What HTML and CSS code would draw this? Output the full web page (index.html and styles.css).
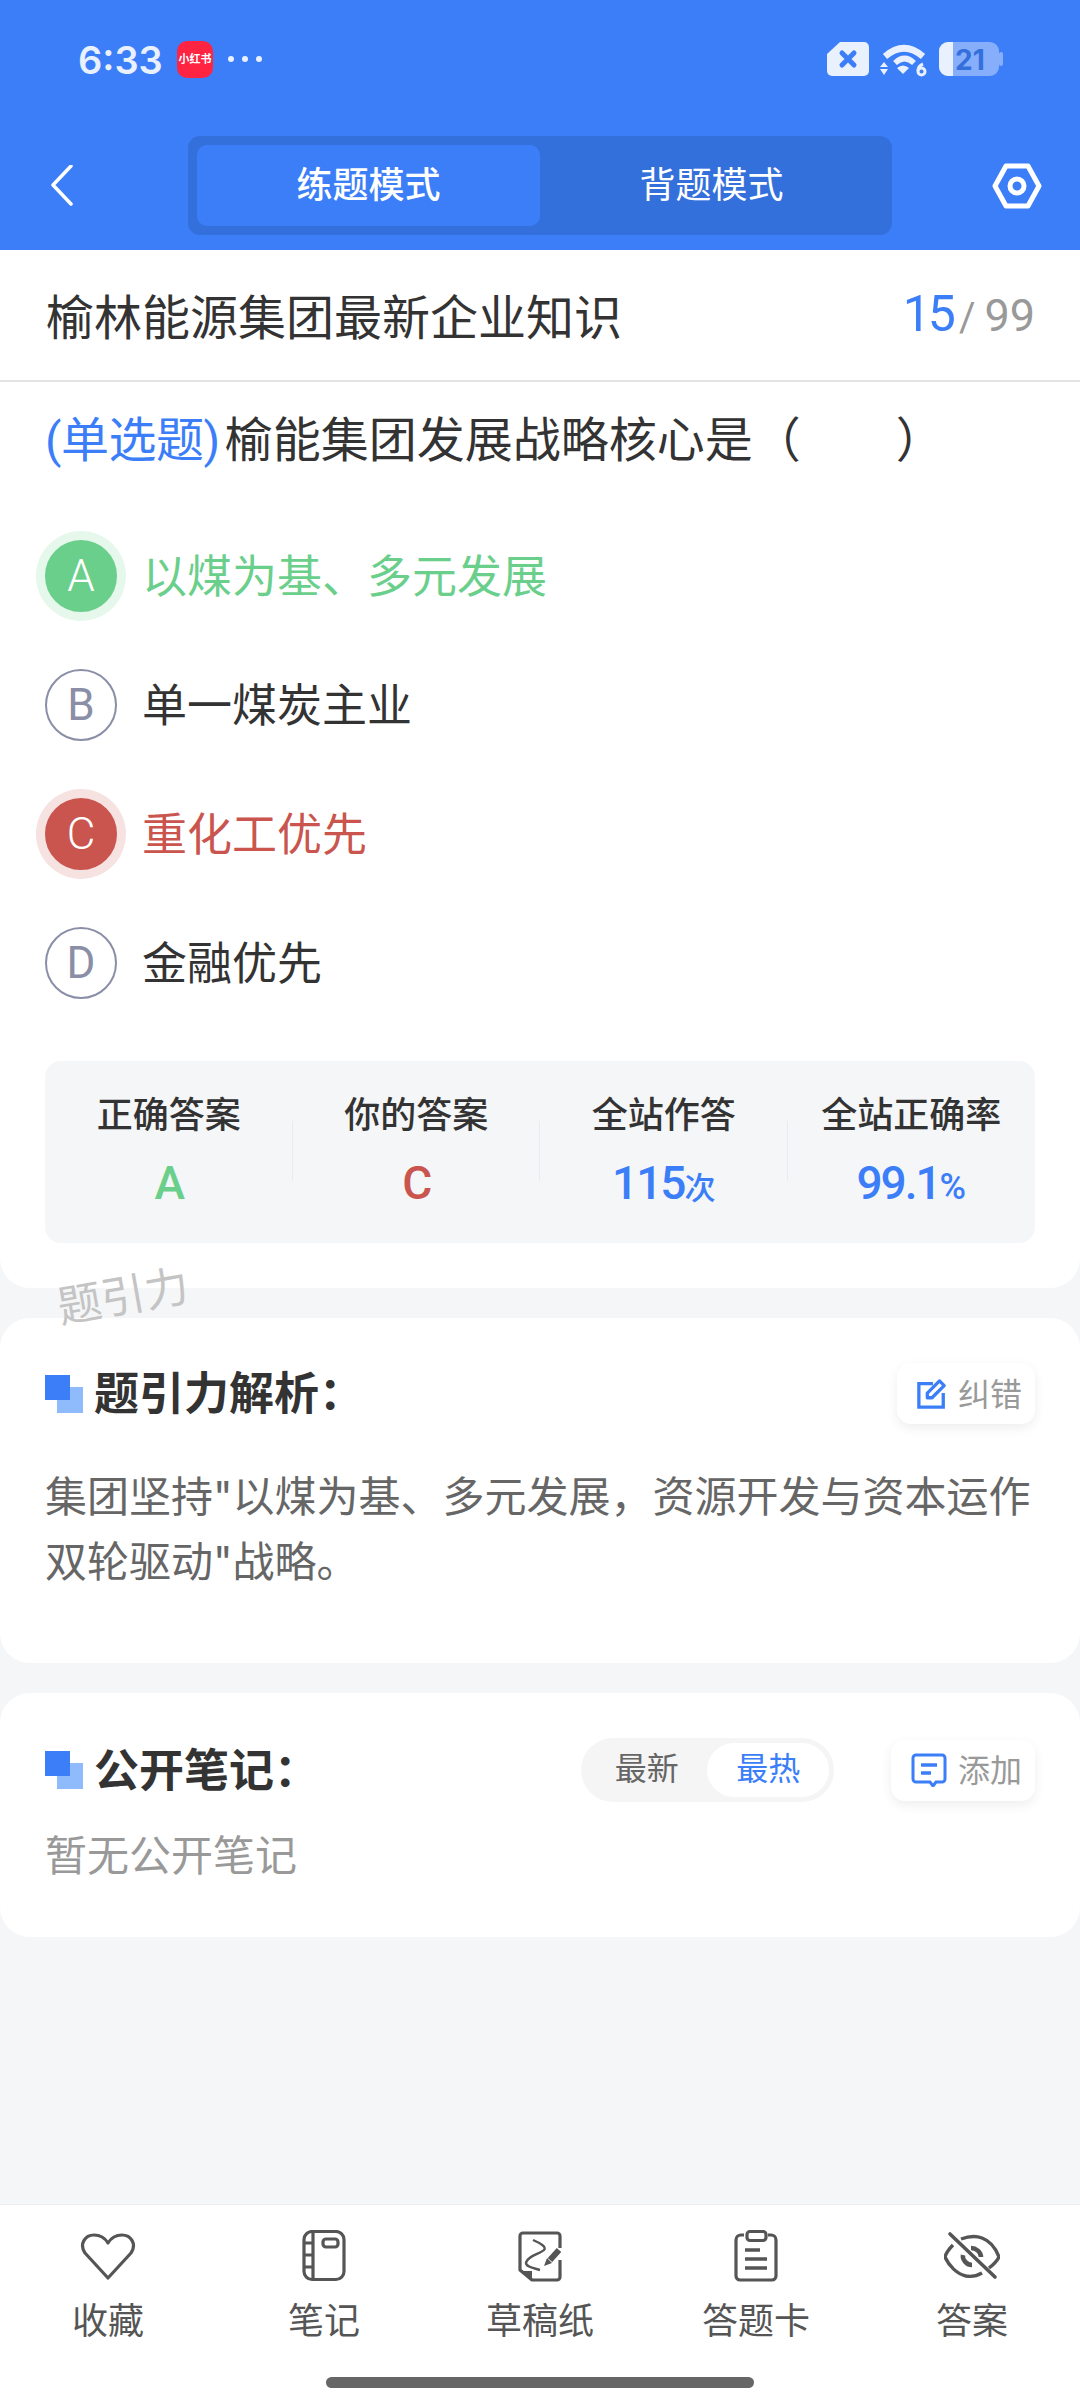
FILE: index.html
```html
<!DOCTYPE html>
<html lang="zh-CN">
<head>
    <meta charset="UTF-8">
    <meta name="viewport" content="width=device-width, initial-scale=1.0">
    <title>题引力</title>
    <link rel="stylesheet" href="styles.css">
</head>
<body>
<div class="page">
    <header class="header">
        <div class="status">
            <span class="time">6:33</span>
            <span class="app-badge">小红书</span>
            <span class="dots"><i></i><i></i><i></i></span>
            <span class="status-right">
                <svg width="44" height="36" viewBox="0 0 44 36"><path d="M14 1h24a5 5 0 0 1 5 5v24a5 5 0 0 1-5 5H6a5 5 0 0 1-5-5V13z" fill="#e9f0fe"/><path d="M16 12l12 12M28 12L16 24" stroke="#3b7ef8" stroke-width="5" stroke-linecap="round"/></svg>
                <svg width="48" height="36" viewBox="0 0 48 36"><path d="M5 15.5Q24-1 43 15.5" fill="none" stroke="#e9f0fe" stroke-width="6.5"/><path d="M15 22Q24.5 13 34 22" fill="none" stroke="#e9f0fe" stroke-width="5.5"/><path d="M17 27Q23 22 29 27L23 33z" fill="#e9f0fe"/><path d="M4 21l4 5H0zM4 34l4-6H0z" fill="#e9f0fe"/><circle cx="41.500" cy="30.500" r="3.500" fill="none" stroke="#e9f0fe" stroke-width="3"/><path d="M38 30q0-5 5-7" fill="none" stroke="#e9f0fe" stroke-width="3"/></svg>
                <svg width="66" height="36" viewBox="0 0 66 36"><rect x="1" y="1" width="60" height="34" rx="9" fill="#87aefb"/><rect x="61" y="11" width="4" height="14" rx="2" fill="#87aefb"/><path d="M10 1h5v34h-5a9 9 0 0 1-9-9V10a9 9 0 0 1 9-9z" fill="#e9f0fe"/><text x="17" y="29" class="battery-num">21</text></svg>
            </span>
        </div>
        <nav class="nav">
            <svg class="back" width="24" height="42" viewBox="0 0 24 42"><path d="M21 1L3 20l18 19" fill="none" stroke="#fff" stroke-width="3.500" stroke-linecap="round" stroke-linejoin="round"/></svg>
            <div class="modes">
                <div class="mode mode-on">练题模式</div>
                <div class="mode">背题模式</div>
            </div>
            <svg class="gear" width="50" height="46" viewBox="0 0 50 46"><path d="M14 3h22l11 20-11 20H14L3 23z" fill="none" stroke="#fff" stroke-width="5" stroke-linejoin="round"/><circle cx="25" cy="23" r="7" fill="none" stroke="#fff" stroke-width="5"/></svg>
        </nav>
    </header>

    <section class="card card-top">
        <div class="title-row">
            <span class="title">榆林能源集团最新企业知识</span>
            <span class="count"><b>15</b><em>/</em>99</span>
        </div>
        <div class="body">
            <p class="question"><span class="qtype">(单选题)</span>榆能集团发展战略核心是（<span class="blank"></span>）</p>
            <ul class="options">
                <li class="option right"><span class="letter">A</span>以煤为基、多元发展</li>
                <li class="option"><span class="letter">B</span>单一煤炭主业</li>
                <li class="option wrong"><span class="letter">C</span>重化工优先</li>
                <li class="option"><span class="letter">D</span>金融优先</li>
            </ul>
            <div class="stats">
                <div class="stat"><span class="stat-label">正确答案</span><span class="stat-val green">A</span></div>
                <div class="stat"><span class="stat-label">你的答案</span><span class="stat-val red">C</span></div>
                <div class="stat"><span class="stat-label">全站作答</span><span class="stat-val blue">115<small>次</small></span></div>
                <div class="stat"><span class="stat-label">全站正确率</span><span class="stat-val blue">99.1<small class="pct">%</small></span></div>
            </div>
        </div>
    </section>

    <div class="watermark">题引力</div>

    <section class="card card-analysis">
        <div class="card-head">
            <h3 class="heading">
                <svg width="38" height="38" viewBox="0 0 38 38"><rect x="12" y="12" width="26" height="26" fill="#8fbafc"/><rect width="25" height="25" fill="#3b7ef8"/></svg>
                题引力解析：
            </h3>
            <button class="tool">
                <svg width="30" height="32" viewBox="0 0 32 32"><path d="M17 5H2v25h26V15" fill="none" stroke="#3b7ef8" stroke-width="3.500"/><path d="M11 15L24 2l5 5-13 13h-5z" fill="none" stroke="#3b7ef8" stroke-width="3.500" stroke-linejoin="round"/></svg>
                <span class="tool-text">纠错</span>
            </button>
        </div>
        <p class="analysis">集团坚持"以煤为基、多元发展，资源开发与资本运作双轮驱动"战略。</p>
    </section>

    <section class="card card-notes">
        <div class="card-head">
            <h3 class="heading">
                <svg width="38" height="38" viewBox="0 0 38 38"><rect x="12" y="12" width="26" height="26" fill="#8fbafc"/><rect width="25" height="25" fill="#3b7ef8"/></svg>
                公开笔记：
            </h3>
            <div class="head-right">
                <div class="sort">
                    <span class="sort-item">最新</span>
                    <span class="sort-item sort-on">最热</span>
                </div>
                <button class="tool">
                    <svg width="36" height="34" viewBox="0 0 36 34"><path d="M5 2h26a3 3 0 0 1 3 3v21a3 3 0 0 1-3 3h-6l-3 4-3-4H5a3 3 0 0 1-3-3V5a3 3 0 0 1 3-3z" fill="none" stroke="#3b7ef8" stroke-width="3"/><path d="M10 12h16M10 20h10" stroke="#3b7ef8" stroke-width="3.500"/></svg>
                    <span class="tool-text">添加</span>
                </button>
            </div>
        </div>
        <p class="empty">暂无公开笔记</p>
    </section>

    <div class="spacer"></div>

    <footer class="tabbar">
        <div class="tabs">
            <div class="tab">
                <svg width="56" height="52" viewBox="0 0 56 52"><path d="M28 48L5 23C-1 14 5 5 14 5c6 0 11 3 14 8 3-5 8-8 14-8 9 0 15 9 9 18z" fill="none" stroke="#555" stroke-width="3.200" stroke-linejoin="round"/></svg>
                <span>收藏</span>
            </div>
            <div class="tab">
                <svg width="56" height="52" viewBox="0 0 56 52"><rect x="8" y="1.500" width="40" height="48" rx="8" fill="none" stroke="#555" stroke-width="3.200"/><path d="M17 2v47M8 13h9M8 25h9M8 37h9" stroke="#555" stroke-width="3.200"/><rect x="27" y="9" width="15" height="8" rx="3" fill="none" stroke="#555" stroke-width="3.200"/></svg>
                <span>笔记</span>
            </div>
            <div class="tab">
                <svg width="56" height="52" viewBox="0 0 56 52"><path d="M48 18V6a3 3 0 0 0-3-3H11a3 3 0 0 0-3 3v34l12 10h25a3 3 0 0 0 3-3V30" fill="none" stroke="#555" stroke-width="3.200" stroke-linejoin="round"/><path d="M10 41h10v9z" fill="#555"/><path d="M21 10C28 13 35 17 32 20 28 24 15 26 14 33 14 37 22 38 28 40" fill="none" stroke="#555" stroke-width="2.400"/><path d="M47 20L38 30" stroke="#555" stroke-width="6"/><path d="M35 28l5 5-8 3z" fill="#555"/></svg>
                <span>草稿纸</span>
            </div>
            <div class="tab">
                <svg width="56" height="52" viewBox="0 0 56 52"><path d="M16 5h-3a5 5 0 0 0-5 5v36a4 4 0 0 0 4 4h32a4 4 0 0 0 4-4V10a5 5 0 0 0-5-5h-3" fill="none" stroke="#555" stroke-width="3.200"/><rect x="19" y="1.500" width="19" height="9" rx="3" fill="none" stroke="#555" stroke-width="3.200"/><path d="M17 20h15M17 29h22M17 38h22" stroke="#555" stroke-width="3.600"/></svg>
                <span>答题卡</span>
            </div>
            <div class="tab">
                <svg width="56" height="52" viewBox="0 0 56 52"><path d="M17 9C25 6 33 6 38 8 46 11 52 19 55 27 53 31 49 35 45 38" fill="none" stroke="#555" stroke-width="3.400"/><path d="M9 15C5 19 2 23 1 27 5 36 13 44 22 46 28 47 33 46 38 43" fill="none" stroke="#555" stroke-width="3.400"/><path d="M6 4L51 47" stroke="#555" stroke-width="3.600" stroke-linecap="round"/><path d="M27 18C32 18 37 22 37 27M19 25C18 30 23 35 28 35" fill="none" stroke="#555" stroke-width="4.500"/></svg>
                <span>答案</span>
            </div>
        </div>
        <div class="home-bar"></div>
    </footer>
</div>
</body>
</html>
```

FILE: styles.css
```css
* {
    box-sizing: border-box;
}
body {
    margin: 0;
    font-family: "Inter", "Noto Sans CJK SC", sans-serif;
    color: #333;
}
h3, p, ul {
    margin: 0;
    padding: 0;
}
.page {
    position: relative;
    width: 1080px;
    height: 2400px;
    background: #f5f6f8;
    display: flex;
    flex-direction: column;
    overflow: hidden;
}

/* header */
.header {
    background: #3b7ef8;
    height: 250px;
    color: #fff;
}
.status {
    height: 136px;
    padding: 41px 76px 0 78px;
    display: flex;
    align-items: flex-start;
}
.time {
    font-size: 38px;
    font-weight: 600;
    line-height: 38px;
    color: #e9f0fe;
    width: 99px;
}
.app-badge {
    width: 36px;
    height: 37px;
    border-radius: 10px;
    background: #ff2442;
    color: #fff;
    font-size: 11px;
    font-weight: 700;
    line-height: 37px;
    text-align: center;
    white-space: nowrap;
}
.dots {
    display: flex;
    gap: 8px;
    margin: 15px 0 0 15px;
}
.dots i {
    width: 6px;
    height: 6px;
    border-radius: 50%;
    background: #e9f0fe;
}
.status-right {
    margin-left: auto;
    display: flex;
    gap: 10px;
}
.battery-num {
    font-size: 28px;
    font-weight: 700;
    fill: #3470db;
}
.nav {
    height: 99px;
    padding: 0 38px 0 50px;
    display: flex;
    align-items: center;
}
.modes {
    width: 704px;
    height: 99px;
    margin-left: 114px;
    padding: 9px;
    background: #3470db;
    border-radius: 12px;
    display: flex;
}
.mode {
    flex: 1;
    border-radius: 10px;
    font-size: 36px;
    line-height: 81px;
    text-align: center;
}
.mode-on {
    background: #3b7ef8;
    font-weight: 500;
}
.gear {
    margin-left: auto;
}

/* cards */
.card {
    background: #fff;
}
.card-top {
    border-radius: 0 0 30px 30px;
    padding-bottom: 45px;
}
.title-row {
    height: 132px;
    padding: 0 45px 3px 46px;
    border-bottom: 2px solid #e4e4e4;
    display: flex;
    align-items: center;
    justify-content: space-between;
}
.title {
    font-size: 48px;
}
.count {
    font-family: "Roboto", sans-serif;
    font-size: 45px;
    color: #999;
    display: flex;
    align-items: baseline;
}
.count b {
    font-size: 50px;
    font-weight: 400;
    color: #3b7ef8;
    letter-spacing: -3px;
}
.count em {
    font-style: normal;
    font-size: 40px;
    margin: 0 9px 0 6px;
}
.body {
    padding: 26px 45px 0;
}
.question {
    font-size: 48px;
    line-height: 64px;
    white-space: nowrap;
}
.qtype {
    font-family: "Roboto", "Noto Sans CJK SC", sans-serif;
    color: #3b7ef8;
    letter-spacing: -0.5px;
    margin-right: 5px;
}
.blank {
    display: inline-block;
    width: 95px;
}
.options {
    list-style: none;
    margin-top: 38px;
}
.option {
    height: 129px;
    padding-bottom: 4px;
    display: flex;
    align-items: center;
    font-size: 45px;
}
.letter {
    width: 72px;
    height: 72px;
    margin: 0 25px -4px 0;
    border: 2px solid #8a8ea6;
    border-radius: 50%;
    color: #8a8ea6;
    font-family: "Roboto", sans-serif;
    font-size: 44px;
    font-weight: 400;
    display: flex;
    align-items: center;
    justify-content: center;
}
.right {
    color: #6bcf8c;
}
.right .letter {
    background: #6bcf8c;
    border-color: #6bcf8c;
    color: #fff;
    font-weight: 300;
    box-shadow: 0 0 0 9px #e6f7ec;
}
.wrong {
    color: #c9554e;
}
.wrong .letter {
    background: #c9554e;
    border-color: #c9554e;
    color: #fff;
    font-weight: 300;
    box-shadow: 0 0 0 9px #f6e2e1;
}
.stats {
    margin-top: 34px;
    height: 182px;
    background: #f5f6f8;
    border-radius: 16px;
    display: grid;
    grid-template-columns: repeat(4, 1fr);
}
.stat {
    display: flex;
    flex-direction: column;
    align-items: center;
    padding-top: 32px;
    background: linear-gradient(#e9ebee, #e9ebee) right 60px / 1px 60px no-repeat;
}
.stat:last-child {
    background: none;
}
.stat-label {
    font-size: 36px;
    font-weight: 500;
    line-height: 44px;
}
.stat-val {
    margin-top: 21px;
    font-family: "Roboto", "Noto Sans CJK SC", sans-serif;
    font-size: 46px;
    font-weight: 500;
    line-height: 50px;
    letter-spacing: -2px;
}
.stat-val small {
    font-size: 31px;
    font-weight: 500;
    letter-spacing: 0;
}
.stat-val .pct {
    font-size: 36px;
}
.green {
    color: #6bcf8c;
}
.red {
    color: #c9554e;
}
.blue {
    color: #3b7ef8;
}
.watermark {
    position: absolute;
    left: 57px;
    top: 1266px;
    font-size: 44px;
    line-height: 60px;
    color: #c4c4c4;
    transform: rotate(-10deg);
}
.card-analysis {
    margin-top: 30px;
    border-radius: 30px;
    padding: 45px 45px 69px;
}
.card-notes {
    margin-top: 30px;
    border-radius: 30px;
    padding: 45px 45px 51px;
}
.card-head {
    min-height: 61px;
    display: flex;
    align-items: center;
    justify-content: space-between;
}
.heading {
    font-size: 45px;
    font-weight: 600;
    line-height: 61px;
    display: flex;
    align-items: center;
    gap: 11px;
}
.tool {
    height: 61px;
    padding: 0 13px 0 20px;
    border: 0;
    border-radius: 14px;
    background: #fff;
    box-shadow: 0 4px 12px rgba(0, 0, 0, 0.07);
    color: #999;
    font: inherit;
    font-size: 32px;
    display: flex;
    align-items: center;
    gap: 11px;
}
.tool-text {
    margin-bottom: 4px;
}
.analysis {
    margin-top: 40px;
    font-size: 42px;
    line-height: 65px;
    color: #666;
}
.head-right {
    display: flex;
    align-items: center;
    gap: 57px;
}
.sort {
    width: 253px;
    height: 64px;
    padding: 5px;
    background: #f5f5f5;
    border-radius: 32px;
    display: flex;
    font-size: 32px;
    color: #666;
}
.sort-item {
    flex: 1;
    line-height: 52px;
    text-align: center;
    border-radius: 27px;
}
.sort-on {
    background: #fff;
    color: #3b7ef8;
}
.empty {
    margin-top: 24px;
    font-size: 42px;
    line-height: 60px;
    color: #999;
}
.spacer {
    flex: 1;
}

/* bottom bar */
.tabbar {
    height: 196px;
    background: #fff;
    border-top: 1px solid #eee;
    padding-top: 25px;
}
.tabs {
    display: grid;
    grid-template-columns: repeat(5, 1fr);
}
.tab {
    display: flex;
    flex-direction: column;
    align-items: center;
    font-size: 36px;
    line-height: 48px;
    color: #555;
    gap: 15px;
}
.home-bar {
    width: 428px;
    height: 11px;
    margin: 32px auto 0;
    border-radius: 6px;
    background: #666;
}
```
